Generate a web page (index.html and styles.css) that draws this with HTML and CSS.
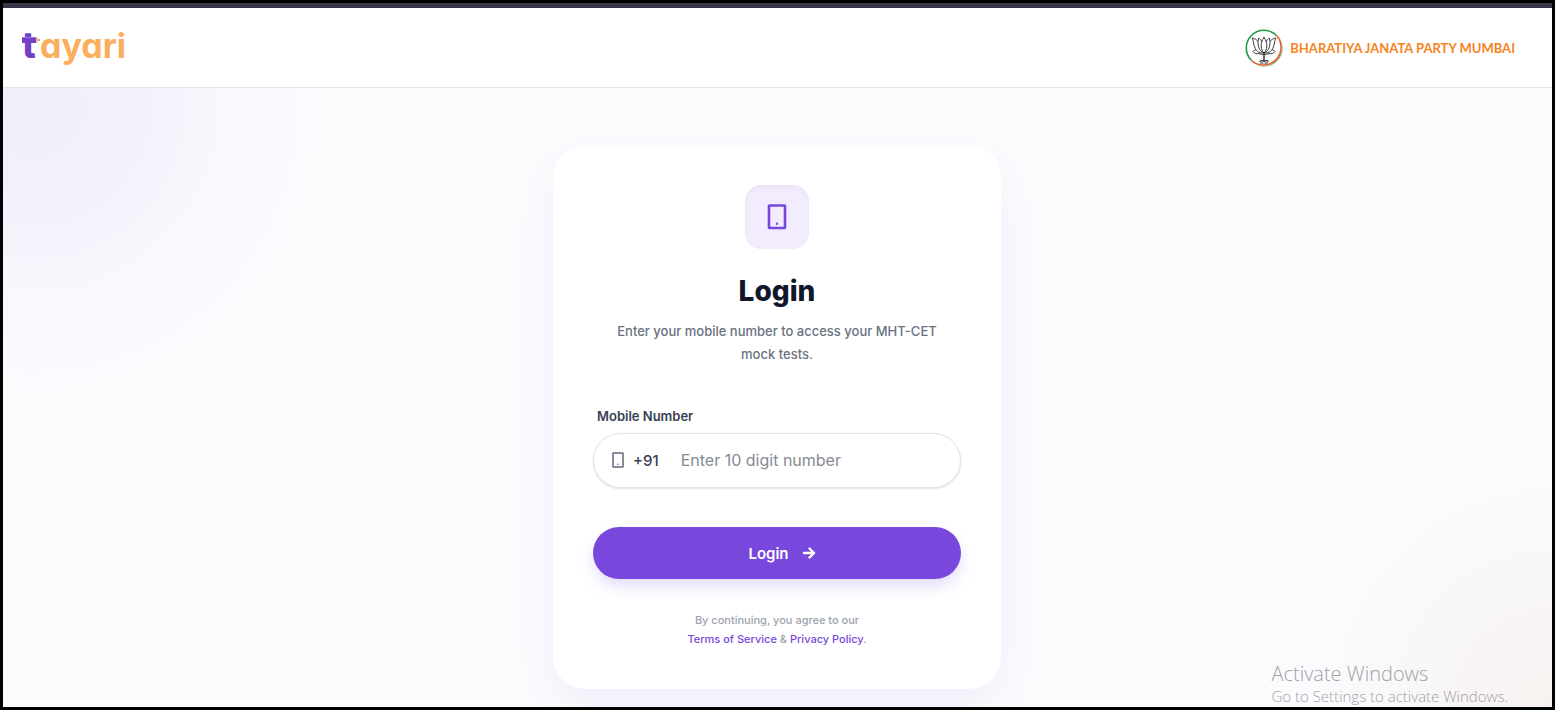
FILE: index.html
```html
<!DOCTYPE html>
<html lang="en">
<head>
  <meta charset="UTF-8">
  <meta name="viewport" content="width=device-width, initial-scale=1.0">
  <title>Tayari - Login</title>
  <link rel="stylesheet" href="styles.css">
</head>
<body>
  <div class="page">
    <header class="header">
      <a href="/" class="logo" aria-label="tayari"><span class="logo-t">t<svg class="logo-pencil" viewBox="0 0 18 6" aria-hidden="true"><path d="M0 0h14v6H0z" fill="#7340c8"/><path d="M0 0.500h14" stroke="#9a78dc"/><path d="M14 0l4 3-4 3z" fill="#e9b39a"/><path d="M17 2.200l1 .8-1 .8z" fill="#4a3340"/></svg></span><span class="logo-rest">ayari</span></a>

      <div class="partner">
        <svg class="partner-icon" viewBox="0 0 38 38" fill="none" aria-hidden="true">
          <circle cx="19" cy="19" r="17.700" fill="#fff" stroke="#23984f" stroke-width="1.600"/>
          <path d="M31.500 6.500A17.700 17.700 0 0 1 6.500 31.500" stroke="#fff" stroke-width="2"/>
          <path d="M31.500 6.500A17.700 17.700 0 0 1 6.500 31.500" stroke="#e4602f" stroke-width="1.600"/>
          <g stroke="#2b2b2b" stroke-width="0.900" stroke-linejoin="round" stroke-linecap="round">
            <path d="M19 8.500c-2 2.500-3 5.500-2.800 8.500.2 3 1.200 5.200 2.800 7 1.600-1.800 2.600-4 2.800-7 .2-3-.8-6-2.800-8.500z"/>
            <path d="M16.700 12.500c-.7-1.500-1.700-2.600-3-3.500-.9 3-.9 6.300 0 9.200.9 2.800 2.700 4.800 5.300 5.800"/>
            <path d="M21.300 12.500c.7-1.500 1.700-2.600 3-3.500.9 3 .9 6.300 0 9.200-.9 2.800-2.700 4.800-5.300 5.800"/>
            <path d="M13 12.200c-1.500-1.700-3.600-2.800-6-3.200 1 1.500 1.300 3 1.600 5 .6 4 2 7 4.200 8.700 1.700 1.100 3.900 1.500 6.200 1.300"/>
            <path d="M25 12.200c1.500-1.700 3.600-2.800 6-3.200-1 1.500-1.300 3-1.600 5-.6 4-2 7-4.200 8.700-1.700 1.100-3.900 1.500-6.200 1.300"/>
            <path d="M10.500 21c-1.200.2-2 .7-2.500 1.500 1.200 1.800 3.500 2.600 6 2.200M27.500 21c1.200.2 2 .7 2.500 1.500-1.200 1.800-3.500 2.600-6 2.200"/>
            <path d="M14 24.700c3 1 7 1 10 0"/>
            <path d="M19 25v7" stroke-width="1.400"/>
            <path d="M15 32.300c1.200-1 2.500-1 4 0 1.500-1 2.800-1 4 0M15.500 34h2.500M20 34h2.500" stroke-width="1.200"/>
          </g>
        </svg>
        <span class="partner-name">BHARATIYA JANATA PARTY MUMBAI</span>
      </div>
    </header>

    <main class="main">
      <div class="card">
        <div class="card-icon">
          <svg viewBox="0 0 20 26" fill="none" stroke="#7848dc" aria-hidden="true">
            <rect x="2" y="1.500" width="16" height="22.500" rx="0.500" stroke-width="2.600"/>
            <circle cx="10" cy="19.800" r="1.200" fill="#7848dc" stroke="none"/>
          </svg>
        </div>

        <h1>Login</h1>
        <p class="subtitle">Enter your mobile number to access your MHT-CET mock tests.</p>

        <form class="login-form">
          <label for="mobile">Mobile Number</label>
          <div class="input-group">
            <svg class="input-icon" viewBox="0 0 12 16" fill="none" stroke="#5f6878" aria-hidden="true">
              <rect x="1" y="1" width="10" height="14" rx="0.500" stroke-width="1.500"/>
              <circle cx="6" cy="12.300" r="0.800" fill="#5f6878" stroke="none"/>
            </svg>
            <span class="prefix">+91</span>
            <input type="tel" id="mobile" maxlength="10" placeholder="Enter 10 digit number">
          </div>

          <button type="submit" class="login-button">
            Login
            <svg viewBox="0 0 14 14" fill="none" stroke="#fff" stroke-width="2.400" stroke-linecap="round" stroke-linejoin="round" aria-hidden="true">
              <path d="M2 7H12M7.500 2.500L12 7l-4.500 4.500"/>
            </svg>
          </button>
        </form>

        <p class="terms">
          By continuing, you agree to our<br>
          <a href="/terms">Terms of Service</a> &amp; <a href="/privacy">Privacy Policy</a>.
        </p>
      </div>
    </main>

    <div class="watermark">
      <p class="watermark-title">Activate Windows</p>
      <p class="watermark-text">Go to Settings to activate Windows.</p>
    </div>
  </div>
</body>
</html>
```
FILE: styles.css
```css
* {
  box-sizing: border-box;
}
html {
  background: #fff;
}
body {
  margin: 0;
  padding: 0 2px 3px 0;
  height: 100vh;
  font-family: Inter, sans-serif;
  color: #0f172a;
}
h1, p {
  margin: 0;
}
a {
  text-decoration: none;
}
.page {
  position: relative;
  display: flex;
  flex-direction: column;
  height: 100%;
  border: 3px solid #000;
  overflow: hidden;
}

/* header */
.header {
  display: flex;
  flex-shrink: 0;
  justify-content: space-between;
  align-items: center;
  height: 85px;
  padding: 0 37px 0 19px;
  border-top: 5px solid #3a3448;
  border-bottom: 1px solid #e3e7e9;
  background: #fff;
}
.logo {
  display: flex;
  align-items: baseline;
  padding-bottom: 5px;
  font-size: 34px;
  line-height: 40px;
  font-weight: 700;
  /* single-storey a */
  font-feature-settings: "cv11";
  color: #fbae5b;
}
.logo-t {
  position: relative;
  width: 18px;
  font-size: 36px;
  font-weight: 800;
  color: #7340c8;
}
.logo-pencil {
  position: absolute;
  left: 0;
  top: 12px;
  width: 18px;
  height: 6px;
}
.partner {
  display: flex;
  align-items: center;
  gap: 7px;
}
.partner-icon {
  width: 38px;
  height: 38px;
}
.partner-name {
  font-family: Lato, sans-serif;
  font-size: 13px;
  font-weight: 700;
  color: #f5841f;
}

/* login card */
.main {
  display: flex;
  flex: 1;
  justify-content: center;
  align-items: flex-start;
  min-height: 0;
  padding: 57px 1px 0 0;
  background:
    radial-gradient(circle at 30px 20px, #efeff9 0, #f2f2fc 110px, rgba(247, 248, 253, 0.8) 190px, rgba(250, 251, 253, 0) 290px),
    radial-gradient(circle at 100% 100%, #f8f2ef 0, #f8f4f5 80px, rgba(250, 251, 253, 0) 230px),
    #fafbfd;
}
.card {
  width: 448px;
  padding: 40px;
  border-radius: 32px;
  background: #fff;
  box-shadow: 0 20px 50px -12px rgba(90, 90, 220, 0.1);
  text-align: center;
}
.card-icon {
  display: flex;
  justify-content: center;
  align-items: center;
  width: 64px;
  height: 64px;
  margin: 0 auto 24px;
  border-radius: 16px;
  background: #f2ecfe;
  box-shadow: inset 0 2px 4px rgba(60, 40, 120, 0.05);
}
.card-icon svg {
  width: 20px;
  height: 26px;
}
h1 {
  font-size: 28px;
  line-height: 36px;
  font-weight: 800;
}
.subtitle {
  padding: 0 16px;
  margin-top: 11px;
  font-size: 13px;
  line-height: 23px;
  font-weight: 500;
  color: #6b7280;
}
.login-form {
  margin-top: 40px;
}
.login-form label {
  display: block;
  padding-left: 4px;
  margin-bottom: 7px;
  font-size: 13px;
  line-height: 20px;
  font-weight: 600;
  color: #374151;
  text-align: left;
}
.input-group {
  display: flex;
  align-items: center;
  height: 55px;
  padding: 0 20px 1px 18px;
  border: 1px solid #e1e4e8;
  border-radius: 28px;
  background: #fff;
  box-shadow: 0 1px 2px rgba(0, 0, 0, 0.12);
}
.input-icon {
  width: 12px;
  height: 16px;
  margin-right: 9px;
}
.prefix {
  font-size: 15px;
  font-weight: 500;
  color: #374151;
}
.input-group input {
  flex: 1;
  min-width: 0;
  padding: 0;
  margin-left: 22px;
  border: none;
  outline: none;
  background: none;
  font: inherit;
  font-size: 16px;
}
.input-group input::placeholder {
  color: #858b94;
}
.login-button {
  display: flex;
  justify-content: center;
  align-items: center;
  gap: 13px;
  width: 100%;
  height: 52px;
  padding: 0 0 0 10px;
  margin-top: 39px;
  border: none;
  border-radius: 26px;
  background: #7848dc;
  box-shadow: 0 8px 16px -2px rgba(120, 72, 220, 0.22);
  font: inherit;
  font-size: 15px;
  font-weight: 600;
  color: #fff;
  cursor: pointer;
}
.login-button svg {
  width: 14px;
  height: 14px;
}
.terms {
  margin-top: 32px;
  font-size: 11px;
  line-height: 19px;
  font-weight: 500;
  color: #9ca3af;
}
.terms a {
  color: #7848dc;
}

/* system watermark, sits over the page */
.watermark {
  position: absolute;
  right: 44px;
  bottom: 1px;
  font-family: "Open Sans", sans-serif;
  font-weight: 300;
  color: #a2a2a6;
}
.watermark-title {
  font-size: 20px;
  line-height: 24px;
}
.watermark-text {
  font-size: 15px;
  line-height: 20px;
}
```
